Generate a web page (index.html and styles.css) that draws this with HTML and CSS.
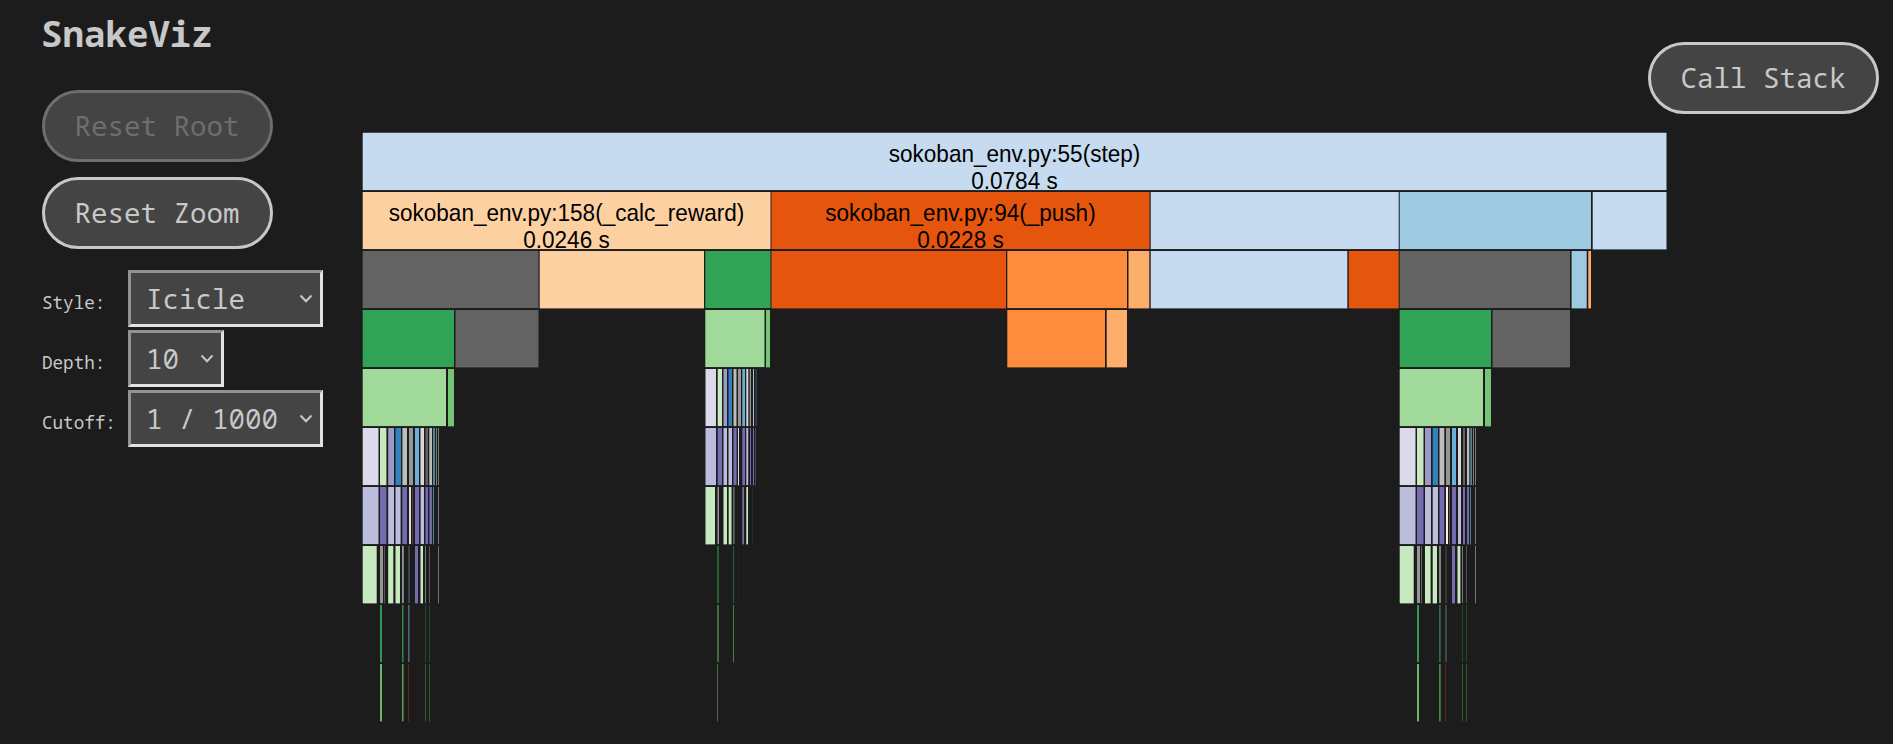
FILE: index.html
```html
<!DOCTYPE html>
<html lang="en">
<head>
<meta charset="utf-8">
<title>SnakeViz</title>
<link rel="stylesheet" href="styles.css">
</head>
<body>
<main class="page">
  <aside class="sidebar">
    <h1 class="title">SnakeViz</h1>
    <div class="resets">
      <button class="btn" disabled>Reset Root</button>
      <button class="btn">Reset Zoom</button>
    </div>
    <div class="options">
      <div class="option">
        <span class="label">Style:</span>
        <div class="select"><span>Icicle</span><svg class="chevron" viewBox="0 0 14 9"><path d="M1.5 1.5 7 7.3 12.5 1.5"/></svg></div>
      </div>
      <div class="option">
        <span class="label">Depth:</span>
        <div class="select select-short"><span>10</span><svg class="chevron" viewBox="0 0 14 9"><path d="M1.5 1.5 7 7.3 12.5 1.5"/></svg></div>
      </div>
      <div class="option">
        <span class="label">Cutoff:</span>
        <div class="select"><span>1 / 1000</span><svg class="chevron" viewBox="0 0 14 9"><path d="M1.5 1.5 7 7.3 12.5 1.5"/></svg></div>
      </div>
    </div>
  </aside>
  <svg class="chart" viewBox="362 132 1306 592" width="1306" height="592">
    <g id="cells"></g>
    <g class="names">
      <text x="1014.5" y="162.3">sokoban_env.py:55(step)</text>
      <text x="1014.5" y="189">0.0784 s</text>
      <text x="566.5" y="221.3">sokoban_env.py:158(_calc_reward)</text>
      <text x="566.5" y="248">0.0246 s</text>
      <text x="960.5" y="221.3">sokoban_env.py:94(_push)</text>
      <text x="960.5" y="248">0.0228 s</text>
    </g>
  </svg>
  <button class="btn btn-stack">Call Stack</button>
</main>
<script src="chart.js"></script>
</body>
</html>
```
FILE: styles.css
```css
* { box-sizing: border-box; }
body {
  margin: 0;
  height: 744px;
  overflow: hidden;
  background: #1c1c1c;
  color: #c8c8c8;
  font-family: "Noto Sans Mono", "DejaVu Sans Mono", "Liberation Mono", monospace;
}
.page { display: flex; align-items: flex-start; }
.sidebar { width: 320px; margin-left: 42px; padding-top: 13px; flex: none; }
.title { margin: 0 0 0 -1px; font-size: 35.8px; line-height: 41px; font-weight: bold; }
.resets { display: flex; flex-direction: column; gap: 15px; margin-top: 36px; }
.btn {
  width: 231px;
  height: 72px;
  flex: none;
  padding: 0 1px 2px 0;
  border: 3px solid #c8c8c8;
  border-radius: 36px;
  background: #444;
  color: #c8c8c8;
  font-family: inherit;
  font-size: 27.5px;
}
.btn:disabled { border-color: #6e6e6e; color: #6e6e6e; }
.btn-stack { margin: 42px 0 0 -20px; }
.options { display: flex; flex-direction: column; gap: 3px; margin-top: 21px; }
.option { display: flex; align-items: flex-start; height: 57px; }
.label { width: 86px; flex: none; font-size: 17.6px; line-height: 20px; padding-top: 22px; }
.select {
  width: 195px;
  height: 57px;
  padding: 0 7px 0 15px;
  border: 3px solid;
  border-color: #929292 #e2e2e2 #e2e2e2 #929292;
  background: #444;
  font-size: 27.5px;
  line-height: 51px;
  display: flex;
  align-items: center;
  justify-content: space-between;
  white-space: pre;
}
.select-short { width: 96px; }
.chevron { width: 14px; height: 9px; fill: none; stroke: #c8c8c8; stroke-width: 2; }
.chart { display: block; flex: none; margin-top: 132px; }
.names text {
  font-family: "Liberation Sans", Arial, sans-serif;
  font-size: 24px;
  text-anchor: middle;
  fill: #000;
  transform: scaleX(0.94);
  transform-box: fill-box;
  transform-origin: center;
}
```
FILE: chart.js
```js
// Each row holds cells as [left, right, colour]; rows are 59px apart.
const sky = '#c6dbef', pool = '#9ecae1', blue = '#3182bd', azure = '#6baed6';
const peach = '#fdd0a2', rust = '#e6550d', orange = '#fd8d3c', apricot = '#fdae6b';
const green = '#31a354', leaf = '#74c476', mint = '#a1d99b', pale = '#c7e9c0';
const gray = '#636363', mid = '#969696', silver = '#bdbdbd', light = '#d9d9d9';
const violet = '#756bb1', mauve = '#9e9ac8', lilac = '#bcbddc', haze = '#dadaeb';

const rows = [
  [[363, 1666.5, sky]],
  [[363, 770.5, peach], [771.5, 1149.5, rust], [1150.7, 1398.7, sky], [1400, 1591, pool], [1592.7, 1666.5, sky]],
  [[363, 538.5, gray], [539.7, 704, peach], [705.3, 770.5, green], [771.5, 1006, rust], [1007.3, 1127, orange],
   [1128.5, 1149.3, apricot], [1150.7, 1347.3, sky], [1348.7, 1398.7, rust], [1400, 1570, gray], [1571.6, 1586.7, pool], [1588.3, 1591, apricot]],
  [[363, 454, green], [455.5, 538.5, gray], [705.3, 764.5, mint], [766, 770, leaf], [1007.3, 1105, orange],
   [1106.7, 1127, apricot], [1400, 1491, green], [1492.5, 1570, gray]],
  [[363, 446, mint], [448, 454, leaf],
   [705.5, 716, haze], [717.7, 722, pale], [723.5, 727, mauve], [728.5, 732, blue], [733.5, 736.5, silver], [738, 741, mid],
   [742.3, 745, azure], [746.3, 748.3, light], [749.7, 751, mid], [753, 754, silver], [755.3, 757, '#2c3f4c'],
   [1400, 1483, mint], [1485, 1491, leaf]],
  [[363, 378.5, haze], [380, 386.4, pale], [388.2, 394, mauve], [395.5, 401, blue], [402.4, 407, silver], [409, 413, mid],
   [415, 419, azure], [420.5, 424, light], [425.5, 428, gray], [429.3, 432, silver], [433, 435, '#568298'], [436, 437, '#777'], [438, 439, '#777'],
   [705.5, 716, lilac], [717.7, 722, violet], [723.5, 727, lilac], [728.5, 732, lilac], [733.5, 736.6, violet], [738, 739, haze],
   [742.3, 745, violet], [746.3, 748.2, lilac], [750, 751, violet], [753, 754, violet], [755, 756, '#3c4a5a'],
   [1400, 1415.5, haze], [1417, 1423.5, pale], [1425, 1431, mauve], [1432.7, 1438, blue], [1439.5, 1444.3, silver], [1446, 1450, mid],
   [1452, 1456, azure], [1458, 1461, light], [1463, 1465, gray], [1467, 1469.3, silver], [1470.3, 1472, '#568298'], [1473, 1474, '#777'], [1475, 1476, '#777']],
  [[363, 378.5, lilac], [380, 386.4, violet], [388.2, 394, lilac], [395.5, 400.6, lilac], [402.3, 407, violet], [409, 411, haze], [412, 413, '#5a3d2b'],
   [415, 419, violet], [420.6, 424, lilac], [425.5, 428, violet], [429.4, 432, violet], [433, 434, '#4f7f90'], [438, 439, '#777'],
   [705.5, 715, pale], [717.5, 719, mid], [723.5, 727, pale], [728.7, 731.5, pale], [733, 734.6, gray], [742.3, 744, violet], [746.3, 748, pale], [752, 753, '#282828'],
   [1400, 1415.5, lilac], [1417, 1423.5, violet], [1425, 1431, lilac], [1432.7, 1438, lilac], [1439.5, 1444.3, violet], [1446, 1448, '#f2f0f7'], [1449, 1450, '#63512f'],
   [1452, 1456, violet], [1458, 1461, lilac], [1463, 1465, violet], [1467, 1469, violet], [1470, 1471, '#4f7f90'], [1475, 1476, '#777']],
  [[363, 376.7, pale], [380, 383, mid], [384, 385, '#555'], [388.2, 393.3, pale], [395.5, 400, pale], [402, 403.8, mid], [408, 410, '#36454d'],
   [415, 418, violet], [420.5, 423, pale], [425, 426, '#777'], [429, 430, '#555'], [438, 439, '#6d7a69'],
   [717, 719, '#236034'], [733, 734, '#236034'], [738, 739, '#222'],
   [1400, 1413.7, pale], [1417, 1420, mid], [1421, 1422, '#5d6a5a'], [1425, 1430.6, pale], [1432.7, 1437, pale], [1439, 1441, '#858585'], [1445, 1447, '#30393f'],
   [1452, 1455, violet], [1457.5, 1460.4, pale], [1462, 1463, '#777'], [1466, 1467, '#555'], [1475, 1476, '#6d7a69']],
  [[380, 382, '#2f9a50'], [402, 403.5, '#2f8a4a'], [408, 409.6, '#59636b'], [425, 426, '#1f4a2a'], [429, 430, '#1f4a2a'],
   [717, 719, '#426c42'], [733, 734, '#4a7a4a'],
   [1417, 1419, '#2f9a50'], [1439, 1440.7, '#2a7040'], [1445, 1447, '#3d464d'], [1462, 1463, '#1f4a2a'], [1466, 1467, '#1f4a2a']],
  [[380, 382, '#6ab56b'], [402, 403.5, '#5fa05f'], [408, 409, '#5a2a12'], [425, 426, '#2f5a30'], [429, 430, '#2f5a30'],
   [717, 718, '#4a6a44'],
   [1417, 1419, '#6ab56b'], [1439, 1440.7, '#4f844f'], [1445, 1446, '#5a2a12'], [1462, 1463, '#2f5a30'], [1466, 1467, '#2f5a30']],
];

const layer = document.getElementById('cells');
function add(x, y, w, h, fill, opacity) {
  const r = document.createElementNS('http://www.w3.org/2000/svg', 'rect');
  const attrs = { x, y, width: w, height: h, fill, opacity };
  for (const name in attrs) r.setAttribute(name, attrs[name]);
  layer.appendChild(r);
}
rows.forEach((cells, row) => {
  const top = 133 + row * 59;
  for (const [left, right, colour] of cells) {
    add(left, top, right - left, 57, colour, 1);
    // Soft outer edge below each cell, and above the root.
    const covered = row < 9 && rows[row + 1].some(c => c[0] < right && c[1] > left);
    add(left, top + 57, right - left, 1, colour, covered ? 0.08 : 0.4);
    if (row === 0) add(left, 132, right - left, 1, colour, 0.25);
    if (left === 363 || left === 1400) add(left - 1, top, 1, 57, colour, 0.3);
  }
});
```
